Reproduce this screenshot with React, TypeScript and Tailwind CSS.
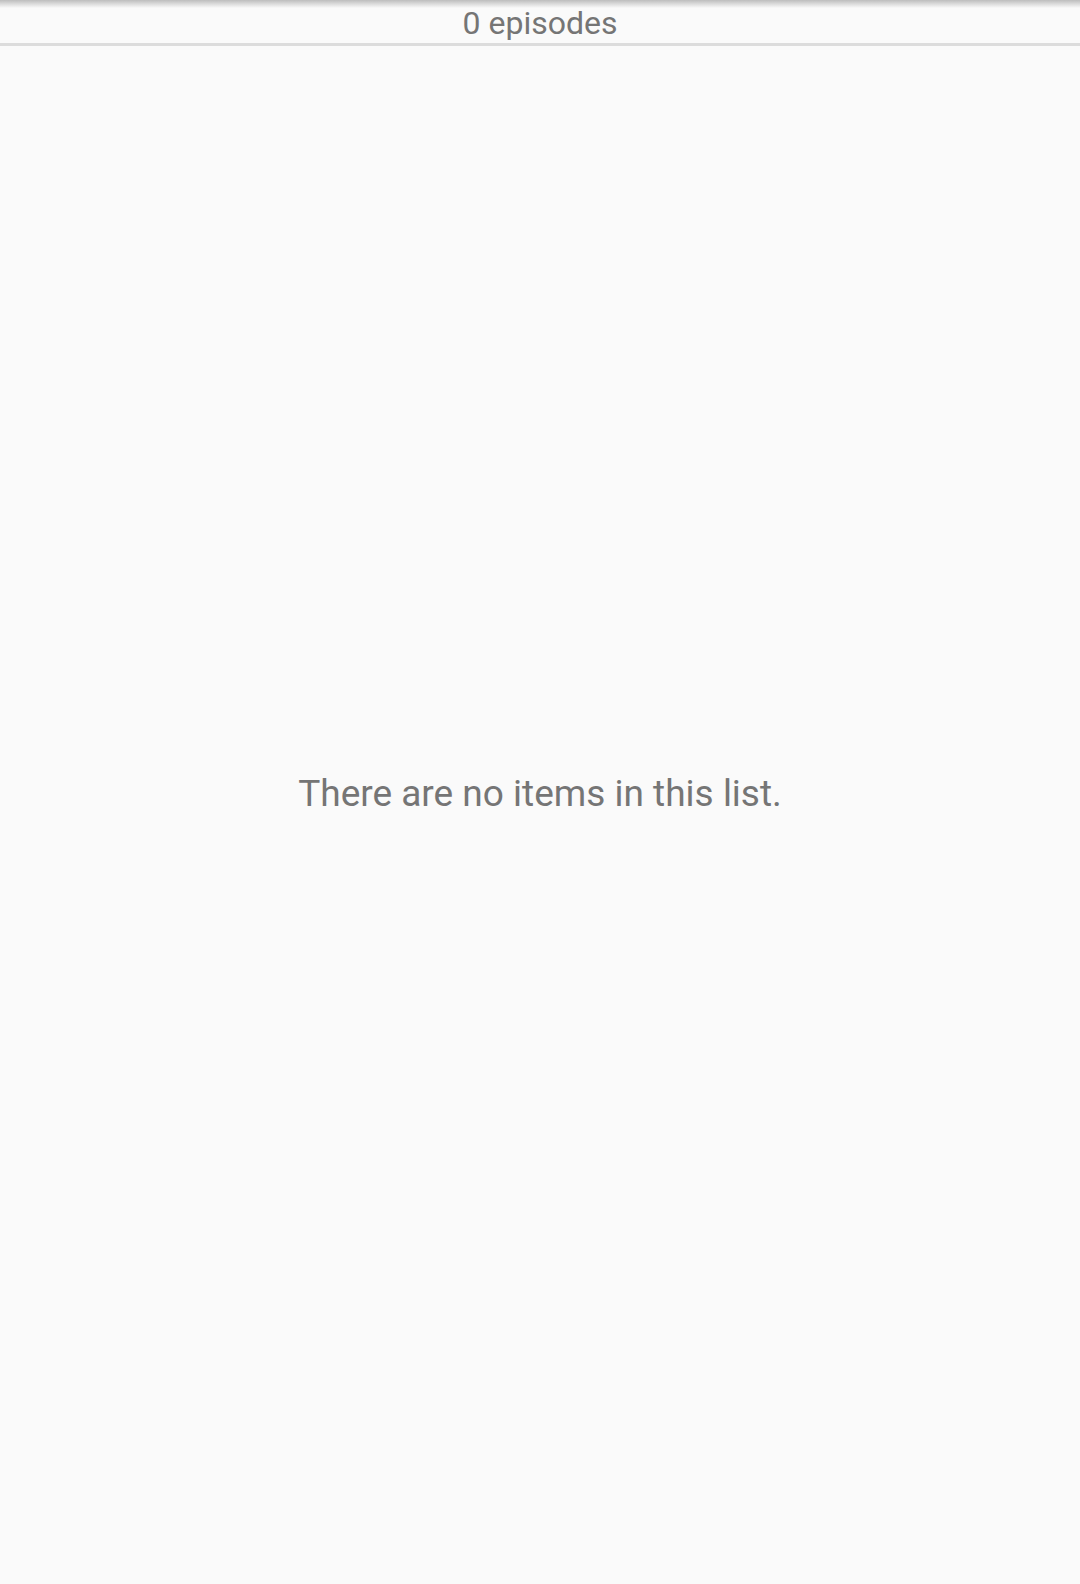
import React from 'react';

const App: React.FC = () => {
  return (
    <div className="min-h-[1584px] h-[1584px] w-full bg-[#fafafa] flex flex-col relative font-['Roboto',sans-serif]">
      <div className="pointer-events-none absolute inset-x-0 top-0 h-[8px] bg-gradient-to-b from-[#bdbdbd] to-[#fafafa]/0" />
      <div className="h-[46px] flex-shrink-0 border-b-[3px] border-[#dcdcdc] flex items-center justify-center pt-[3px]">
        <span className="text-[32px] leading-none text-[#757575]">0 episodes</span>
      </div>
      <div className="flex-1 flex items-center justify-center pb-[43px]">
        <p className="text-[37px] text-[#757575]">There are no items in this list.</p>
      </div>
    </div>
  );
};

export default App;
